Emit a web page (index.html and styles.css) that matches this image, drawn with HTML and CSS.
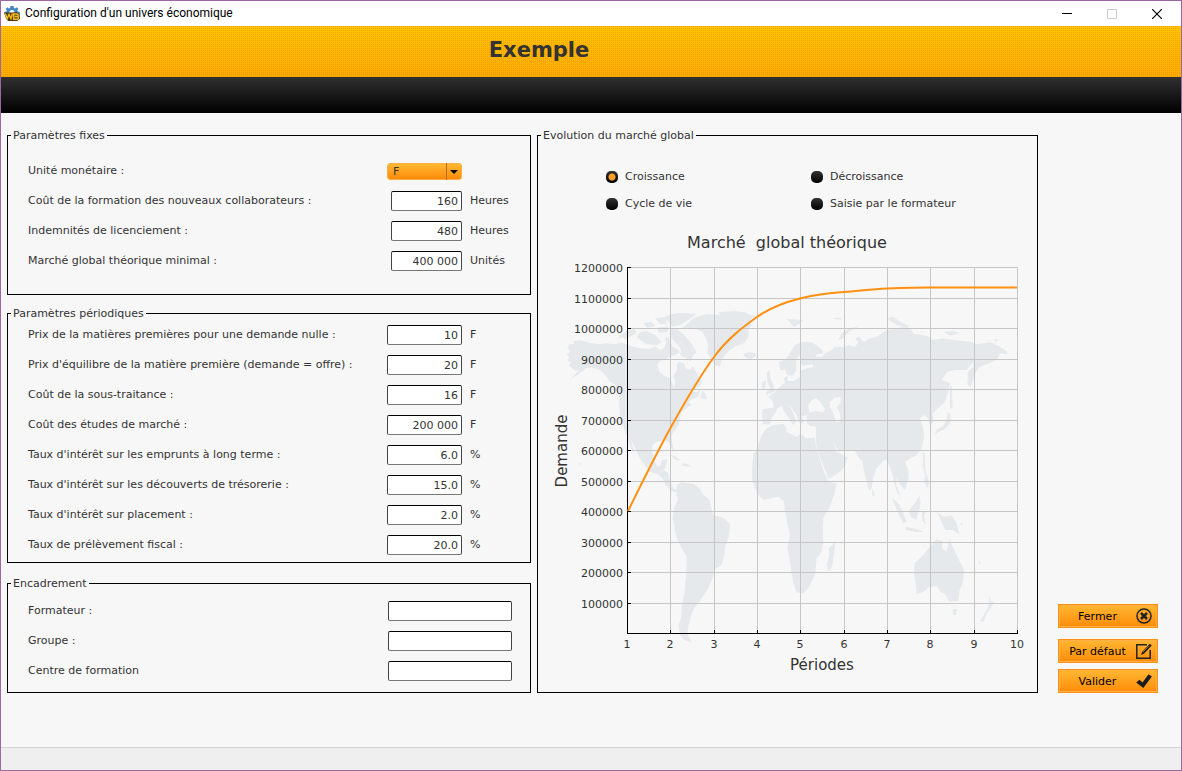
FILE: index.html
```html
<!DOCTYPE html>
<html lang="fr">

<head>
	<meta charset="UTF-8">
	<title>Configuration d'un univers économique</title>
	<meta name="viewport" content="width=device-width, initial-scale=1.0">
	<link rel="stylesheet" href="styles.css">
</head>

<body>

	<div class="titre-fenetre">
		<svg class="logo" viewBox="0 0 16 16" width="16" height="16" aria-hidden="true">
			<path fill="#3f87c4" d="M6.500 0h3l.4 1.900 1.300.5L12.800 1.300l1.500 1.500-1 1.600.5 1.200 2 .4v2.500H.5V6l1.900-.4.500-1.200-1.100-1.600 1.500-1.500 1.600 1.100 1.200-.5z" />
			<circle cx="8" cy="6.500" r="2.600" fill="#fff" />
			<path fill="#4a3a12" d="M0 6.500h8.500l4-.5 3 1.500.5 5.500-3 2H4L2 12.500z" />
			<path fill="none" stroke="#f5bd1f" stroke-width="1.500" d="M1.200 7.500l2 5L5 8.500l2 4 1.500-5M9.800 8v5.200h3.400c1.700 0 1.700-2.600 0-2.600h-2.200 2c1.500 0 1.500-2.600 0-2.600z" />
		</svg>
		<span class="texte-fenetre">Configuration d'un univers économique</span>
		<button class="btn-fenetre" type="button" aria-label="Réduire">
			<svg viewBox="0 0 10 10" width="10" height="10"><path d="M0 4.500h10" stroke="#000" /></svg>
		</button>
		<button class="btn-fenetre" type="button" aria-label="Agrandir" disabled>
			<svg viewBox="0 0 10 10" width="10" height="10"><path d="M.5.500h9v9h-9z" fill="none" stroke="#ccc" /></svg>
		</button>
		<button class="btn-fenetre" type="button" aria-label="Fermer la fenêtre">
			<svg viewBox="0 0 10 10" width="10" height="10"><path d="M0 0l10 10M10 0L0 10" stroke="#000" stroke-width="1.200" /></svg>
		</button>
	</div>

	<header class="entete">
		<h1>Exemple</h1>
	</header>
	<div class="barre"></div>

	<main class="contenu">
		<form class="formulaire" id="univers">

			<fieldset class="fixes">
				<legend>Paramètres fixes</legend>
				<div class="ligne">
					<label for="monnaie">Unité monétaire :</label>
					<span class="liste">
						<select id="monnaie">
							<option>F</option>
						</select>
						<svg class="fleche" viewBox="0 0 16 17" width="16" height="17" aria-hidden="true">
							<path d="M.5 0v17" stroke="#b56a08" />
							<path d="M4 7h8l-4 4z" fill="#000" />
						</svg>
					</span>
					<span class="unite"></span>
				</div>
				<div class="ligne">
					<label for="formation">Coût de la formation des nouveaux collaborateurs :</label>
					<input type="text" id="formation" value="160">
					<span class="unite">Heures</span>
				</div>
				<div class="ligne">
					<label for="indemnites">Indemnités de licenciement :</label>
					<input type="text" id="indemnites" value="480">
					<span class="unite">Heures</span>
				</div>
				<div class="ligne">
					<label for="minimal">Marché global théorique minimal :</label>
					<input type="text" id="minimal" value="400 000">
					<span class="unite">Unités</span>
				</div>
			</fieldset>

			<fieldset class="periodiques">
				<legend>Paramètres périodiques</legend>
				<div class="ligne">
					<label for="prix-nul">Prix de la matières premières pour une demande nulle :</label>
					<input type="text" id="prix-nul" value="10">
					<span class="unite">F</span>
				</div>
				<div class="ligne">
					<label for="prix-equilibre">Prix d'équilibre de la matière première (demande = offre) :</label>
					<input type="text" id="prix-equilibre" value="20">
					<span class="unite">F</span>
				</div>
				<div class="ligne">
					<label for="sous-traitance">Coût de la sous-traitance :</label>
					<input type="text" id="sous-traitance" value="16">
					<span class="unite">F</span>
				</div>
				<div class="ligne">
					<label for="etudes">Coût des études de marché :</label>
					<input type="text" id="etudes" value="200 000">
					<span class="unite">F</span>
				</div>
				<div class="ligne">
					<label for="emprunts">Taux d'intérêt sur les emprunts à long terme :</label>
					<input type="text" id="emprunts" value="6.0">
					<span class="unite">%</span>
				</div>
				<div class="ligne">
					<label for="decouverts">Taux d'intérêt sur les découverts de trésorerie :</label>
					<input type="text" id="decouverts" value="15.0">
					<span class="unite">%</span>
				</div>
				<div class="ligne">
					<label for="placement">Taux d'intérêt sur placement :</label>
					<input type="text" id="placement" value="2.0">
					<span class="unite">%</span>
				</div>
				<div class="ligne">
					<label for="fiscal">Taux de prélèvement fiscal :</label>
					<input type="text" id="fiscal" value="20.0">
					<span class="unite">%</span>
				</div>
			</fieldset>

			<fieldset class="encadrement">
				<legend>Encadrement</legend>
				<div class="ligne">
					<label for="formateur">Formateur :</label>
					<input type="text" id="formateur">
				</div>
				<div class="ligne">
					<label for="groupe">Groupe :</label>
					<input type="text" id="groupe">
				</div>
				<div class="ligne">
					<label for="centre">Centre de formation</label>
					<input type="text" id="centre">
				</div>
			</fieldset>

		</form>
		<!-- /FORMULAIRE -->

		<fieldset class="evolution" form="univers">
			<legend>Evolution du marché global</legend>
			<div class="choix">
				<label><input type="radio" name="evolution" checked>Croissance</label>
				<label><input type="radio" name="evolution">Décroissance</label>
				<label><input type="radio" name="evolution">Cycle de vie</label>
				<label><input type="radio" name="evolution">Saisie par le formateur</label>
			</div>

			<svg class="graphique" viewBox="0 0 499 474" role="img" aria-label="Marché global théorique">
				<!-- Carte du monde -->
				<g class="carte" transform="translate(2 37) scale(.3333)">
					<!-- Amériques -->
					<path d="M80 297L92 290 82 278 88 268 104 266 100 258 122 256 150 264 180 268 196 265 225 268 245 262 268 272 300 280 330 282 345 274 360 285 372 278 380 262 374 250 384 245 392 262 398 275 412 282 420 292 405 300 390 305 375 312 360 318 352 330 358 350 372 362 388 368 396 385 402 398 406 380 400 362 412 345 410 330 416 320 432 325 438 340 450 345 458 332 468 350 478 365 486 380 478 395 462 398 452 408 470 412 480 405 475 425 455 432 445 440 455 450 440 458 425 470 420 490 415 510 400 530 394 545 396 560 402 585 392 578 388 562 372 556 350 560 336 572 338 595 345 620 352 636 362 630 366 615 382 612 378 632 372 645 386 655 388 672 394 690 405 705 412 700 408 712 392 708 378 690 366 668 350 656 330 650 318 635 300 610 288 585 272 552 284 596 272 580 262 545 250 515 240 490 238 450 236 410 225 390 208 378 196 360 180 345 160 338 140 338 128 348 112 360 96 368 86 374 104 360 118 345 106 348 96 340 86 330 94 322 82 318 88 308z" />
					<path d="M428 218L445 205 460 190 480 182 500 178 540 180 535 172 580 168 615 172 630 180 650 182 632 192 634 210 625 225 626 245 612 265 590 272 570 285 555 300 545 315 540 335 524 330 512 310 502 290 505 270 498 250 488 232 470 222 450 222z" />
					<path d="M385 180L420 174 470 176 455 188 440 198 420 210 398 215 385 200 372 190zM390 222L410 220 432 240 452 262 470 290 460 300 452 318 436 308 420 300 424 285 412 268 395 250 388 236zM300 232L320 228 345 240 365 262 350 270 320 268 305 258 290 245zM262 225L285 222 290 235 270 245 255 252 245 240zM310 205L335 200 345 212 322 218zM345 190L375 186 380 208 360 206zM350 218L385 214 382 232 358 234zM240 238l14-4 2 10-20 6zM488 405l10 14 2 14-20-4z" />
					<path d="M610 296L625 292 645 294 650 302 632 312 616 308zM388 598L405 604 420 616 408 616zM425 625L445 628 455 635 430 633zM118 622l6 4-4 6z" />
					<path d="M412 690L425 682 438 684 460 686 478 700 490 720 508 732 514 760 520 780 550 788 570 808 568 840 556 870 553 900 545 930 525 942 518 970 505 1000 488 1025 475 1045 462 1060 452 1085 446 1110 442 1135 455 1162 432 1155 420 1140 416 1110 424 1085 426 1050 434 1010 438 960 440 905 425 880 410 850 404 820 398 790 402 760 414 735 408 710z" />
					<!-- Afrique -->
					<path d="M680 520L700 510 730 506 740 520 738 530 756 538 770 547 780 536 800 550 825 548 828 575 850 645 865 680 890 685 885 710 870 755 850 790 848 830 850 860 845 890 830 910 825 960 805 1000 790 1015 770 1012 760 985 750 920 742 880 750 840 735 770 732 740 715 725 690 730 672 735 655 720 645 700 636 670 636 640 640 600 655 570 665 540zM886 858L884 885 876 935 866 950 861 930 868 900 866 880 878 870z" />
					<!-- Europe et Asie -->
					<path fill-rule="evenodd" d="M668 508L666 480 668 462 700 458 700 440 685 425 705 410 720 395 735 385 732 368 742 362 744 378 762 378 780 365 782 348 800 340 820 336 818 328 790 332 780 322 784 305 776 300 768 320 770 345 758 362 742 360 735 345 720 345 718 320 738 312 752 290 765 270 785 262 812 260 832 272 850 288 848 295 830 298 828 305 845 305 855 295 875 285 885 275 912 276 925 270 945 275 955 262 945 250 958 245 972 262 985 252 1010 245 1040 225 1062 222 1090 215 1115 225 1122 238 1150 240 1165 245 1180 255 1210 250 1240 255 1290 260 1310 268 1350 262 1375 272 1400 288 1403 298 1380 295 1372 312 1355 322 1320 335 1308 350 1300 375 1290 400 1282 385 1284 350 1300 335 1300 320 1280 345 1245 345 1222 350 1205 375 1230 385 1225 410 1215 440 1195 460 1178 475 1180 500 1170 512 1165 490 1150 480 1140 490 1150 520 1152 550 1145 580 1130 600 1108 612 1095 620 1105 645 1106 670 1095 705 1082 690 1070 670 1068 690 1080 720 1072 715 1062 680 1055 650 1045 625 1035 612 1010 640 1000 665 995 700 988 708 980 680 970 640 968 620 955 605 945 588 915 585 895 590 880 558 890 590 905 598 922 608 915 635 895 655 865 672 858 650 845 620 830 580 828 548 828 515 810 512 800 505 800 480 786 484 792 505 778 504 770 480 755 460 748 450 762 480 768 500 760 510 740 480 730 465 725 452 712 460 705 475 695 490 690 508zM808 470L805 450 815 435 828 430 840 440 855 462 850 472 825 468 808 474zM870 440L885 428 902 425 902 445 890 455 900 475 902 500 888 502 880 475 870 455z" />
					<path d="M680 420L705 408 702 395 692 370 688 345 680 355 682 380 690 398 678 412zM668 380L678 378 676 400 665 402zM740 192L790 195 780 205 762 215zM895 255L905 235 930 220 955 215 925 232 910 250zM1040 190l20-5 20 15 28 14-6 5-30-8zM1210 230l30-2 20 6-30 8zM880 188l24 0-2 6-20-2zM1363 252l12 2-8 6z" />
					<path d="M1185 540L1190 525 1210 512 1222 490 1225 470 1232 480 1230 505 1215 522 1195 532zM1230 390l6 5 2 60-8 10zM1148 590l6 5 2 50 6 20 6 20-6 15-10-20 4-20-6-20zM997 700l8 20-8 5z" />
					<!-- Océanie -->
					<path d="M1055 728L1075 745 1090 775 1100 800 1090 805 1075 775zM1095 815L1130 822 1150 830 1130 832 1098 825zM1108 765L1125 745 1138 722 1142 740 1138 765 1128 795 1112 785zM1145 770l15-2-8 15 6 25-10-10zM1192 772L1210 785 1235 782 1250 805 1258 838 1238 825 1215 825 1205 800zM1260 808l8-6-2 10zM1316 915l8 10-6 2z" />
					<path d="M1124 925L1145 905 1162 885 1175 870 1190 852 1208 858 1205 880 1220 890 1228 850 1236 870 1250 900 1262 925 1272 945 1270 980 1258 1010 1255 1038 1228 1040 1218 1020 1202 1010 1190 992 1165 998 1150 1010 1130 1018 1128 990 1122 955zM1238 1062l14 0-4 18-8 0zM1348 1020L1352 1038 1362 1042 1350 1062 1340 1075 1332 1100 1320 1098 1335 1075 1345 1055z" />
				</g>

				<path class="grille" d="M90 49.500h390M90 80.500h390M90 110.500h390M90 141.500h390M90 171.500h390M90 202.500h390M90 232.500h390M90 263.500h390M90 293.500h390M90 324.500h390M90 354.500h390M90 385.500h390M132.500 49v367M176.500 49v367M219.500 49v367M262.500 49v367M306.500 49v367M349.500 49v367M392.500 49v367M436.500 49v367M479.500 49v367" />
				<path class="axes" d="M89.500 49v367M89 415.500h391M90 49.500h3M90 80.500h3M90 110.500h3M90 141.500h3M90 171.500h3M90 202.500h3M90 232.500h3M90 263.500h3M90 293.500h3M90 324.500h3M90 354.500h3M90 385.500h3M132.500 412v3M176.500 412v3M219.500 412v3M262.500 412v3M306.500 412v3M349.500 412v3M392.500 412v3M436.500 412v3M479.500 412v3" />
				<path class="courbe" d="M90 293C104 265 118 236 133 209S162 158 176 139 205 109 219 99 248 84 262 80.500 292 75 306 74 335 71 349 70.500 378 69.500 392 69.500H479" />

				<text class="titre-graphique" x="249" y="30">Marché&nbsp; global théorique</text>
				<g class="ordonnees">
					<text x="85" y="54">1200000</text>
					<text x="85" y="85">1100000</text>
					<text x="85" y="115">1000000</text>
					<text x="85" y="146">900000</text>
					<text x="85" y="176">800000</text>
					<text x="85" y="207">700000</text>
					<text x="85" y="237">600000</text>
					<text x="85" y="268">500000</text>
					<text x="85" y="298">400000</text>
					<text x="85" y="329">300000</text>
					<text x="85" y="359">200000</text>
					<text x="85" y="390">100000</text>
				</g>
				<g class="abscisses">
					<text x="89" y="430">1</text>
					<text x="132" y="430">2</text>
					<text x="176" y="430">3</text>
					<text x="219" y="430">4</text>
					<text x="262" y="430">5</text>
					<text x="306" y="430">6</text>
					<text x="349" y="430">7</text>
					<text x="392" y="430">8</text>
					<text x="436" y="430">9</text>
					<text x="479" y="430">10</text>
				</g>
				<text class="titre-axe" x="284" y="452">Périodes</text>
				<text class="titre-axe" transform="translate(29 233) rotate(-90)">Demande</text>
			</svg>
		</fieldset>
		<!-- /EVOLUTION -->

		<div class="actions">
			<button class="bouton fermer" type="button">
				<span>Fermer</span>
				<svg viewBox="0 0 16 16" width="16" height="16" aria-hidden="true">
					<circle cx="8" cy="8" r="7" fill="none" stroke="#222" stroke-width="1.500" />
					<path d="M5 5l6 6M11 5l-6 6" stroke="#222" stroke-width="2.600" />
				</svg>
			</button>
			<button class="bouton" type="reset" form="univers">
				<span>Par défaut</span>
				<svg viewBox="0 0 16 16" width="16" height="16" aria-hidden="true">
					<path d="M11 1.700H.8v13.500h13.400V7" fill="none" stroke="#222" stroke-width="1.500" />
					<path d="M5 12l1-3L13.800.8 15.800 2.600 8 10.800z" fill="#222" />
					<path d="M6.800 9.200L13 2.800" stroke="#ffa01f" stroke-width=".6" />
				</svg>
			</button>
			<button class="bouton" type="submit" form="univers">
				<span>Valider</span>
				<svg viewBox="0 0 16 16" width="16" height="16" aria-hidden="true">
					<path d="M.2 9.500L3.500 6.800l3 2.700L12.500 1.200l3.400 2.400L7.300 15z" fill="#1c1c1c" />
				</svg>
			</button>
		</div>
	</main>
	<!-- /CONTENU -->

	<footer class="etat"></footer>

</body>

</html>
```
FILE: styles.css
```css
/*Reset*/

* {
	margin: 0;
	padding: 0;
	box-sizing: border-box;
}

body {
	font-family: "DejaVu Sans", Verdana, sans-serif;
	font-size: 11px;
	line-height: 15px;
	color: #333;
	background-color: #f7f7f7;
	border: 1px solid #9b69a0;
	min-height: 100vh;
	/*Conteneur flex en colonne*/
	display: flex;
	flex-direction: column;
}

input,
select,
button {
	font: inherit;
	color: inherit;
}

/*Barre de titre de la fenêtre*/

.titre-fenetre {
	display: flex;
	align-items: center;
	height: 25px;
	padding: 0 2px 0 3px;
	background-color: #fff;
}

.texte-fenetre {
	flex: 1;
	margin-left: 5px;
	font-family: Roboto, "Segoe UI", sans-serif;
	font-size: 12px;
	color: #000;
}

.btn-fenetre {
	display: flex;
	align-items: center;
	justify-content: center;
	width: 45px;
	height: 24px;
	border: none;
	background: none;
}

/*Entête avec une trame de points*/

.entete {
	height: 51px;
	padding-right: 104px;
	text-align: center;
	background-image:
		conic-gradient(transparent 75%, rgba(226, 130, 0, 0.4) 0),
		linear-gradient(#ffc400, #ffab00);
	background-size: 2px 2px, auto;
}

.entete h1 {
	font-size: 21px;
	line-height: 49px;
}

.barre {
	height: 36px;
	background: linear-gradient(#303030, #000);
}

/*Contenu : formulaire, graphique et boutons*/

.contenu {
	flex: 1;
	display: grid;
	grid-template-columns: 524fr 501fr 114px;
	align-items: stretch;
	align-content: start;
	column-gap: 6px;
	padding: 15px 23px 20px 6px;
}

.formulaire {
	display: flex;
	flex-direction: column;
	gap: 11px;
}

fieldset {
	min-width: 0;
	border: 1px solid #000;
}

legend {
	margin: 0 0 -1px 3px;
	padding: 0 2px;
}

.fixes {
	padding: 14px 0 18px;
}

.periodiques {
	padding-bottom: 2px;
}

.encadrement {
	margin-top: 2px;
	padding: 6px 0;
}

.ligne {
	display: flex;
	align-items: center;
	height: 30px;
	padding-left: 20px;
}

.ligne label {
	flex: 1;
	padding-bottom: 2px;
}

.ligne input {
	width: 75px;
	height: 20px;
	padding: 1px 3px 0;
	text-align: right;
	background-color: #fff;
	border: 1px solid #444;
	border-top-color: #000;
	border-bottom-color: #777;
	border-radius: 2px;
}

.fixes .ligne input {
	width: 71px;
}

.encadrement .ligne input {
	width: 124px;
	margin-right: 18px;
	text-align: left;
}

.unite {
	width: 60px;
	margin-left: 8px;
	padding-bottom: 2px;
}

.liste {
	position: relative;
	display: flex;
}

.liste select {
	appearance: none;
	width: 75px;
	height: 17px;
	padding-left: 5px;
	border: 1px solid #ffae45;
	border-radius: 3px;
	background: linear-gradient(#ffb733, #ff8c0a);
}

.fleche {
	position: absolute;
	top: 0;
	right: 0;
	pointer-events: none;
}

/*Evolution du marché*/

.choix {
	display: grid;
	grid-template-columns: 205px 1fr;
	padding: 21px 0 1px 68px;
}

.choix label {
	display: flex;
	align-items: center;
	gap: 7px;
	height: 27px;
}

.choix input {
	appearance: none;
	width: 12px;
	height: 12px;
	border-radius: 5px;
	background: linear-gradient(#333, #000);
}

.choix input:checked {
	background: radial-gradient(circle, #ffa126 3px, transparent 4px), linear-gradient(#333, #000);
}

.graphique {
	display: block;
	width: 100%;
	fill: #333;
}

.carte {
	fill: #e5e9ec;
}

.grille,
.axes {
	fill: none;
	stroke: #c6c6c6;
	shape-rendering: crispEdges;
}

.axes {
	stroke: #000;
}

.courbe {
	fill: none;
	stroke: #ff9010;
	stroke-width: 2;
}

.titre-graphique {
	font-size: 16px;
	text-anchor: middle;
}

.titre-axe {
	font-size: 15px;
	text-anchor: middle;
}

.ordonnees {
	text-anchor: end;
}

.abscisses {
	text-anchor: middle;
}

/*Boutons d'action*/

.actions {
	display: flex;
	flex-direction: column;
	justify-content: flex-end;
	gap: 6px;
	padding-left: 14px;
}

.bouton {
	display: flex;
	align-items: center;
	height: 24px;
	padding-right: 5px;
	color: #000;
	border: 1px solid #ff9010;
	background: linear-gradient(#ffb733, #ff8c0a);
	box-shadow: inset 0 0 0 1px #ffb04a;
	cursor: pointer;
}

.bouton span {
	flex: 1;
	text-align: center;
}

.fermer {
	margin-bottom: 5px;
}

/*Barre d'état*/

.etat {
	height: 23px;
	background-color: #efefef;
	border-top: 1px solid #d5d5d5;
}
```
